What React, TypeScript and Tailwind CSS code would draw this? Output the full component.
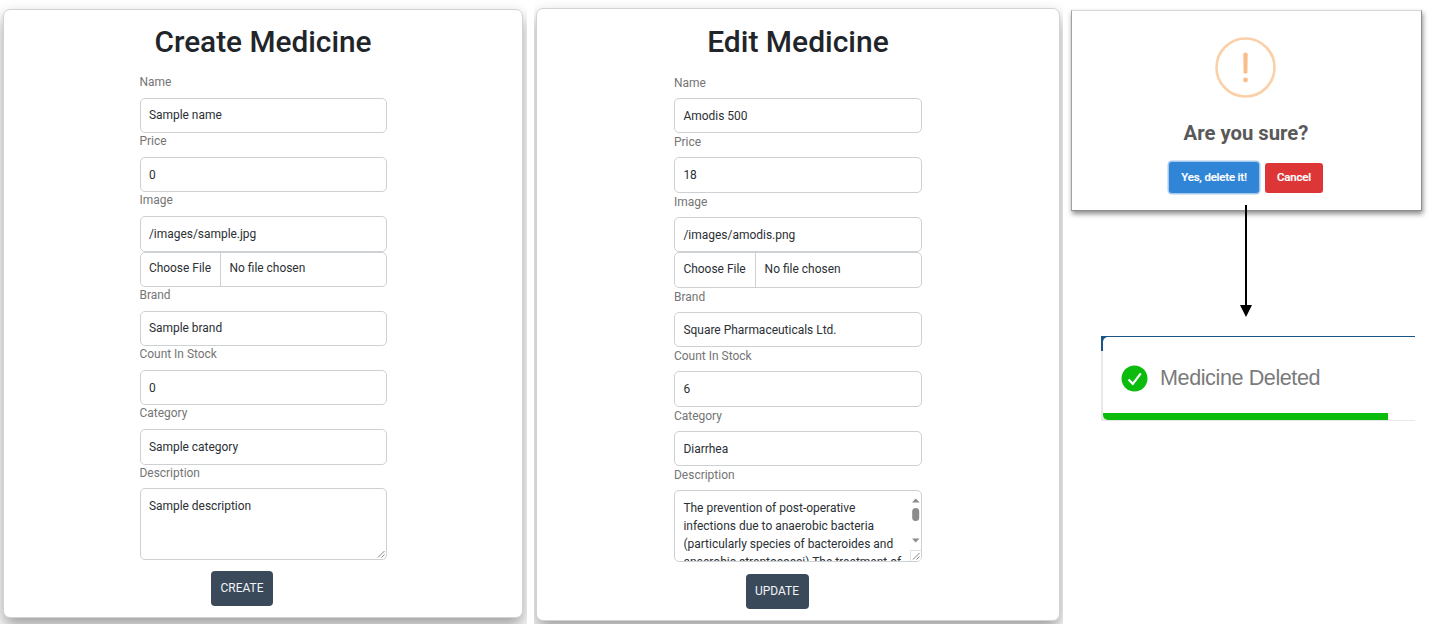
import type { ReactNode } from "react";

function Field({ label, labelClass, children }: { label: string; labelClass: string; children: ReactNode }) {
  return (
    <div className="flex flex-col">
      <label className={"block text-[#757575] " + labelClass}>{label}</label>
      {children}
    </div>
  );
}

function TextInput({ value, className }: { value: string; className: string }) {
  return (
    <input
      type="text"
      defaultValue={value}
      className={"block w-full rounded-[5px] border border-[#ced1d4] bg-white px-[8.4px] text-[#2b3035] outline-none " + className}
    />
  );
}

function FileInput({ className, buttonClass }: { className: string; buttonClass: string }) {
  return (
    <div className={"flex w-full items-stretch overflow-hidden rounded-[5px] border border-[#ced1d4] text-[#2b3035] " + className}>
      <span className={"flex items-center border-r border-[#ced1d4] pl-[8.4px] " + buttonClass}>Choose File</span>
      <span className="flex items-center pl-[8.6px]">No file chosen</span>
    </div>
  );
}

function Grip() {
  return (
    <svg className="absolute right-px bottom-px h-2 w-2" viewBox="0 0 8 8" fill="none" stroke="#777" strokeWidth="0.9">
      <path d="M1 7.5 7.5 1M4.5 7.5 7.5 4.5" />
    </svg>
  );
}

function CreateForm() {
  const label = "h-[23.8px] leading-[17.6px]";
  const input = "h-[35.4px]";
  return (
    <section className="h-[624px] w-[527px] shrink-0 overflow-hidden pt-[9px] pl-[3px]">
      <div className="flex h-[609px] w-[520px] flex-col items-center rounded-[7px] border border-[#d2d2d2] bg-white shadow-[0_8px_16px_rgba(0,0,0,0.38)]">
        <h1 className="mt-[14px] h-[36px] text-[29.8px] leading-[36px] font-medium text-[#212529]">Create Medicine</h1>
        <form className="mt-[14px] flex w-[247px] flex-col text-[11.95px]">
          <Field label="Name" labelClass={label}><TextInput value="Sample name" className={input} /></Field>
          <Field label="Price" labelClass={label}><TextInput value="0" className={input} /></Field>
          <Field label="Image" labelClass={label}>
            <TextInput value="/images/sample.jpg" className={input} />
            <FileInput className={input} buttonClass="w-[80.4px]" />
          </Field>
          <Field label="Brand" labelClass={label}><TextInput value="Sample brand" className={input} /></Field>
          <Field label="Count In Stock" labelClass={label}><TextInput value="0" className={input} /></Field>
          <Field label="Category" labelClass={label}><TextInput value="Sample category" className={input} /></Field>
          <Field label="Description" labelClass={label}>
            <div className="relative h-[71.5px] rounded-[5px] border border-[#ced1d4] px-[8.4px] pt-[7.5px] leading-[18px] text-[#2b3035]">
              Sample description
              <Grip />
            </div>
          </Field>
          <button type="button" className="mt-[11.5px] ml-[71.5px] h-[35px] w-[62px] rounded-[4px] bg-[#3b4a5b] text-[#f2f5f8]">CREATE</button>
        </form>
      </div>
    </section>
  );
}

function EditForm() {
  const label = "h-[23.95px] leading-[18px]";
  const input = "h-[35.55px]";
  return (
    <section className="ml-[7px] h-[624px] w-[529px] shrink-0 overflow-hidden pt-[8px] pl-[2px]">
      <div className="flex h-[613px] w-[524px] flex-col items-center rounded-[7px] border border-[#d2d2d2] bg-white shadow-[0_8px_16px_rgba(0,0,0,0.38)]">
        <h1 className="mt-[15px] h-[36px] text-[30px] leading-[36px] font-medium text-[#212529]">Edit Medicine</h1>
        <form className="mt-[14px] flex w-[248px] flex-col text-[11.97px]">
          <Field label="Name" labelClass={label}><TextInput value="Amodis 500" className={input} /></Field>
          <Field label="Price" labelClass={label}><TextInput value="18" className={input} /></Field>
          <Field label="Image" labelClass={label}>
            <TextInput value="/images/amodis.png" className={input} />
            <FileInput className={input} buttonClass="w-[81px]" />
          </Field>
          <Field label="Brand" labelClass={label}><TextInput value="Square Pharmaceuticals Ltd." className={input} /></Field>
          <Field label="Count In Stock" labelClass={label}><TextInput value="6" className={input} /></Field>
          <Field label="Category" labelClass={label}><TextInput value="Diarrhea" className={input} /></Field>
          <Field label="Description" labelClass={label}>
            <div className="relative h-[72px] overflow-hidden rounded-[5px] border border-[#ced1d4] pt-[8px] pl-[8.4px] leading-[18px] whitespace-nowrap text-[#2b3035]">
              <p>
                The prevention of post-operative<br />
                infections due to anaerobic bacteria<br />
                (particularly species of bacteroides and<br />
                anaerobic streptococci) The treatment of
              </p>
              <svg className="absolute top-0 right-0 h-[59px] w-[12px]" viewBox="0 0 12 59" fill="#8b8b8b">
                <path d="M3 11.5h7.5L6.75 7.5zM3 47.5h7.5L6.75 51.5z" />
                <rect x="3.2" y="17" width="7" height="13" rx="3.5" />
              </svg>
              <div className="absolute right-0 bottom-0 h-[11px] w-[11px] border-t border-l border-[#e2e2e2] bg-white" />
              <Grip />
            </div>
          </Field>
          <button type="button" className="mt-[12px] ml-[71.5px] h-[35px] w-[63px] rounded-[4px] bg-[#3b4a5b] text-[#f2f5f8]">UPDATE</button>
        </form>
      </div>
    </section>
  );
}

function ConfirmDialog() {
  return (
    <div className="ml-[8px] flex h-[201px] w-[351px] flex-col items-center border border-t-[#d5d5d5] border-r-[#8e8e8e] border-b-[#8e8e8e] border-l-[#a0a0a0] bg-white shadow-[1px_3px_5px_rgba(0,0,0,0.45)]">
      <svg className="mt-[26px] mr-[2px] h-[61px] w-[61px]" viewBox="0 0 61 61" fill="none">
        <circle cx="30.5" cy="30.5" r="29" stroke="#fbd0a9" strokeWidth="2.6" />
        <path d="M28.3 17q0-1.5 2.2-1.5t2.2 1.5l-.3 19q-1.9 1.2-3.8 0z" fill="#f9bd89" />
        <circle cx="30.5" cy="43" r="2.4" fill="#f9bd89" />
      </svg>
      <h2 className="mt-[23px] mr-[1px] text-[20.3px] leading-[24px] font-bold text-[#595959]">Are you sure?</h2>
      <div className="mt-[17px] mr-px flex items-center gap-[6px] text-[11.4px] font-medium tracking-[-0.16px] text-white">
        <button type="button" className="h-[31px] w-[90px] rounded-[3px] bg-[#3085d6] pt-px ring-[1.5px] ring-[#a5c9ec] [-webkit-text-stroke:0.2px_white]">Yes, delete it!</button>
        <button type="button" className="h-[30px] w-[58px] rounded-[3px] bg-[#dd3636] [-webkit-text-stroke:0.2px_white]">Cancel</button>
      </div>
    </div>
  );
}

function Toast() {
  return (
    <div className="mt-[19px] ml-[38px] h-[85px] w-[314px] overflow-hidden bg-[linear-gradient(#1d5486_15px,#e8e8e8_15px)] pt-px pl-[2px]">
      <div className="flex h-[83px] w-[316px] flex-col overflow-hidden rounded-[5px] bg-white">
        <div className="flex flex-1 items-center gap-[12px] pt-[6px] pl-[18px]">
          <svg className="h-[27px] w-[27px]" viewBox="0 0 27 27" fill="none">
            <circle cx="13.5" cy="13.5" r="13" fill="#0bbc0c" />
            <path d="m7.5 14.5 4.3 4.3 8-10.5" stroke="white" strokeWidth="2.2" />
          </svg>
          <span className="font-['Liberation_Sans',Arial,sans-serif] text-[21.6px] leading-[28px] tracking-[-0.42px] text-[#7b7b7b]">Medicine Deleted</span>
        </div>
        <div className="h-[7px] w-[285px] bg-[#0bbc0c]" />
      </div>
    </div>
  );
}

export default function App() {
  return (
    <main className="flex h-[630px] w-[1431px] overflow-hidden bg-white font-[Roboto,sans-serif]">
      <CreateForm />
      <EditForm />
      <div className="flex flex-1 flex-col pt-[10px]">
        <ConfirmDialog />
        <svg className="relative mt-[-6px] ml-[177px] h-[112px] w-[12px]" viewBox="0 0 12 112">
          <path d="M5 0h2v100h5L6 112 0 100h5z" fill="black" />
        </svg>
        <Toast />
      </div>
    </main>
  );
}
